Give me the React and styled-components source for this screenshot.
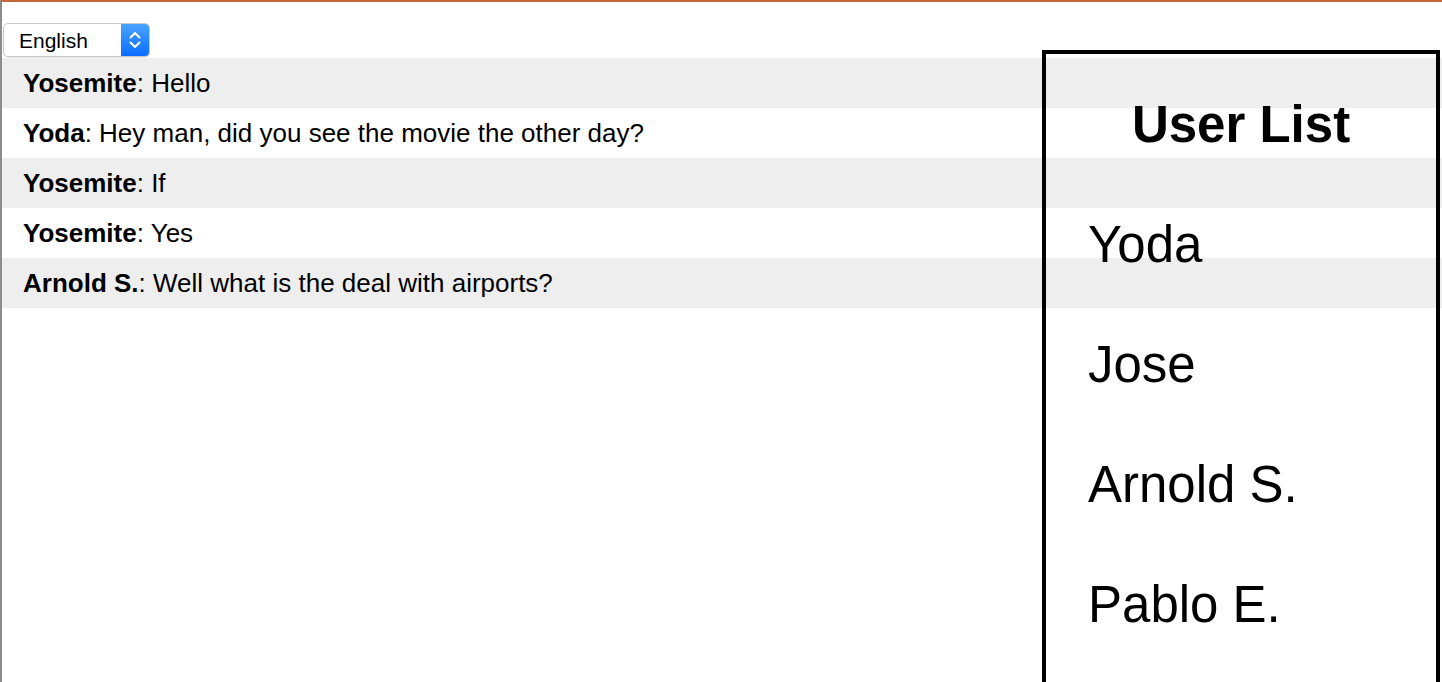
import styled, { createGlobalStyle } from "styled-components";

const GlobalStyle = createGlobalStyle`
    html, body {
        margin: 0;
        padding: 0;
        overflow: hidden;
        background: #fff;
        font-family: "Liberation Sans", Arial, Helvetica, sans-serif;
    }
`

const Page = styled.div`
    position: relative;
    height: 100vh;
    box-sizing: border-box;
    border-top: 2px solid #c2653a;
    border-left: 2px solid #8c8c8c;
    color: #000;
`

const LanguageBar = styled.div`
    padding: 21px 0 1px 1px;
`

const SelectBox = styled.div`
    display: inline-flex;
    width: 147px;
    height: 34px;
    box-sizing: border-box;
    border: 1px solid #c9c9c9;
    border-radius: 5px;
    background: #fff;
    box-shadow: 0 1px 1px rgba(0, 0, 0, 0.08);
    overflow: hidden;
`

const Select = styled.select`
    flex: 1;
    min-width: 0;
    appearance: none;
    -webkit-appearance: none;
    border: none;
    outline: none;
    background: transparent;
    padding: 0 0 0 15px;
    font-family: "Liberation Sans", Arial, sans-serif;
    font-size: 21px;
    color: #000;
`

const ArrowButton = styled.div`
    width: 28px;
    display: flex;
    align-items: center;
    justify-content: center;
    background: linear-gradient(#4aa3ff, #0b6dff);
`

const Messages = styled.div`
    display: flex;
    flex-direction: column;
`

const Message = styled.div`
    height: 50px;
    line-height: 50px;
    padding-left: 21px;
    font-size: 26px;
    white-space: nowrap;
    background: ${(p) => (p.$shaded ? "#eeeeee" : "#ffffff")};

    b {
        font-weight: 700;
    }
`

const UserPanel = styled.div`
    position: absolute;
    top: 48px;
    right: 2px;
    bottom: -60px;
    width: 398px;
    box-sizing: border-box;
    border: 4px solid #000;
    padding-top: 11px;
`

const PanelTitle = styled.h1`
    margin: 0;
    height: 120px;
    line-height: 120px;
    text-align: center;
    font-size: 51px;
    font-weight: 700;
`

const UserName = styled.div`
    height: 120px;
    line-height: 120px;
    padding-left: 42px;
    font-size: 51px;
    white-space: nowrap;
`

const messages = [
  { user: "Yosemite", text: "Hello" },
  { user: "Yoda", text: "Hey man, did you see the movie the other day?" },
  { user: "Yosemite", text: "If" },
  { user: "Yosemite", text: "Yes" },
  { user: "Arnold S.", text: "Well what is the deal with airports?" },
]

const users = ["Yoda", "Jose", "Arnold S.", "Pablo E."]

const Chevrons = () => (
  <svg width="14" height="22" viewBox="0 0 14 22" fill="none">
    <path d="M2.5 8.5 L7 4 L11.5 8.5" stroke="#fff" strokeWidth="2" strokeLinecap="round" strokeLinejoin="round" />
    <path d="M2.5 13.5 L7 18 L11.5 13.5" stroke="#fff" strokeWidth="2" strokeLinecap="round" strokeLinejoin="round" />
  </svg>
)

const App = () => {
  return (
    <Page>
      <GlobalStyle />
      <LanguageBar>
        <SelectBox>
          <Select defaultValue="en">
            <option value="en">English</option>
          </Select>
          <ArrowButton>
            <Chevrons />
          </ArrowButton>
        </SelectBox>
      </LanguageBar>

      <Messages>
        {messages.map((m, i) => (
          <Message key={i} $shaded={i % 2 === 0}>
            <b>{m.user}</b>: {m.text}
          </Message>
        ))}
      </Messages>

      <UserPanel>
        <PanelTitle>User List</PanelTitle>
        {users.map((u) => (
          <UserName key={u}>{u}</UserName>
        ))}
      </UserPanel>
    </Page>
  )
}

export default App
